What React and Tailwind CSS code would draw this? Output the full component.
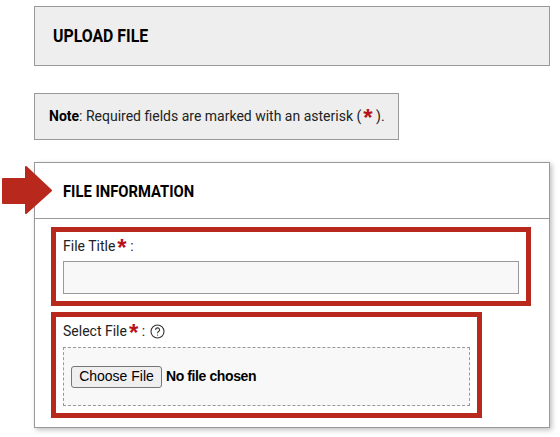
import React from 'react';

const Req = () => <span className="text-[#b5121b] font-bold font-['Liberation_Sans',sans-serif] text-[24px] leading-[0] relative top-[5px] ml-[2px]">*</span>;

export default function App() {
    return (
        <div className="relative w-[560px] h-[437px] overflow-hidden bg-white pt-[6px] pl-[34px] font-['Roboto',sans-serif] text-[14px] text-[#222]">
            {/* Page title */}
            <div className="w-[516px] h-[60px] flex items-center pl-[18px] bg-[#eeeeee] border border-[#999]">
                <h1 className="font-bold text-[18px] text-black origin-left scale-x-[0.88] -translate-y-[1px]">UPLOAD FILE</h1>
            </div>

            {/* Note */}
            <div className="w-[365px] h-[47px] mt-[27px] flex items-center pl-[14px] bg-[#eeeeee] border border-[#999]">
                <p><b className="text-black">Note</b>: Required fields are marked with an asterisk (<Req /> ).</p>
            </div>

            {/* Form panel */}
            <div className="w-[516px] h-[266px] mt-[22px] bg-white border border-[#999] shadow-[2px_2px_5px_rgba(0,0,0,0.25)]">
                <div className="h-[56px] flex items-center pl-[28px] border-b border-[#999]">
                    <h2 className="font-bold text-[17px] text-black origin-left scale-x-[0.87] translate-y-[1px]">FILE INFORMATION</h2>
                </div>
                <div className="pl-[16px] pt-[8px]">
                    <div className="w-[480px] h-[79px] border-[5px] border-[#b9281d] pl-[7px] pt-[2px]">
                        <label className="block h-[27px] leading-[24px]">File Title<Req /> :</label>
                        <input type="text" className="block w-[456px] h-[33px] bg-[#f8f8f8] border border-[#999]" />
                    </div>
                    <div className="w-[431px] h-[106px] mt-[6px] border-[5px] border-[#b9281d] pl-[7px] pt-[2px]">
                        <label className="flex items-center h-[25px] pb-[1px]">
                            <span>Select File<Req /> :</span>
                            <svg className="ml-[5px]" width="15" height="15" viewBox="0 0 15 15" fill="none" stroke="#333" strokeWidth="1.1">
                                <circle cx="7.5" cy="7.5" r="6.5" />
                                <path d="M5.6 5.9a2 2 0 1 1 3 1.7c-.7.4-1.1.8-1.1 1.6" />
                                <path d="M7.5 10.6v1" />
                            </svg>
                        </label>
                        <div className="w-[407px] h-[59px] mt-[3px] flex items-center pl-[7px] bg-[#f8f8f8] border border-dashed border-[#999]">
                            <button className="w-[91px] h-[22px] flex items-center justify-center bg-[#efefef] border border-[#767676] rounded-[3px] text-[14px] text-black font-['Liberation_Sans',sans-serif]">Choose File</button>
                            <span className="ml-[4px] font-bold text-black font-['Liberation_Sans',sans-serif] tracking-[-0.4px]">No file chosen</span>
                        </div>
                    </div>
                </div>
            </div>

            {/* Callout arrow */}
            <svg className="absolute left-0 top-[160px]" width="56" height="60" viewBox="0 0 56 60">
                <path d="M3 19 L26 19 L26 7 L51 30.5 L26 53 L26 43 L3 43 Z" fill="#b9281d" stroke="#b9281d" strokeWidth="2" strokeLinejoin="round" />
            </svg>
        </div>
    );
}
